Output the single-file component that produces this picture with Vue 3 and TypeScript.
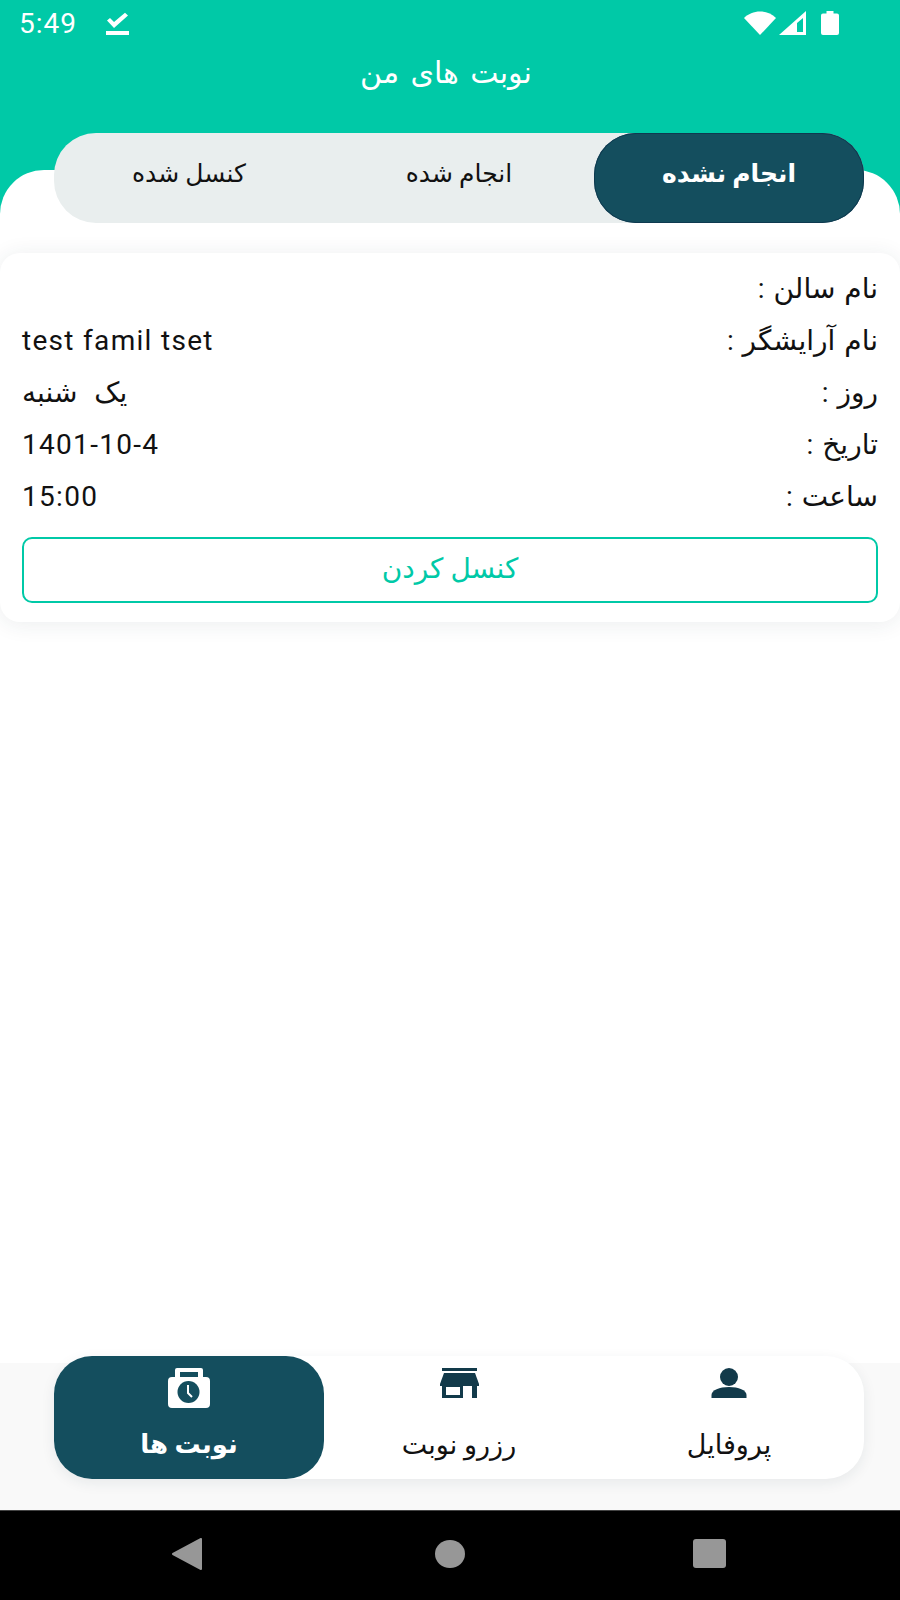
<template>
  <div class="screen">
    <header class="top">
      <div class="status">
        <span class="time">5:49</span>
        <svg class="check" width="24" height="24" viewBox="0 0 24 24">
          <path d="M2 8.500l3-2.600 4 4L20 .8l3 2.600L9 16z" fill="#fff" />
          <rect x="1" y="19" width="23" height="4" fill="#fff" />
        </svg>
        <div class="status-right">
          <svg width="34" height="24" viewBox="0 0 34 24">
            <path d="M1 7C5 3 11 .5 17 .5S29 3 33 7L17 24z" fill="#fff" />
          </svg>
          <svg width="27" height="24" viewBox="0 0 27 24">
            <path d="M0 24L27 0v24zM18 21h6V7l-6 5z" fill="#fff" fill-rule="evenodd" />
          </svg>
          <svg class="battery" width="18" height="24" viewBox="0 0 18 24">
            <path d="M5.500 0h7v2.500H16a2 2 0 0 1 2 2V22a2 2 0 0 1-2 2H2a2 2 0 0 1-2-2V4.500a2 2 0 0 1 2-2h3.500z" fill="#fff" />
          </svg>
        </div>
      </div>
      <h1 class="title">نوبت های من</h1>
    </header>

    <main class="sheet">
      <div class="tabs">
        <button v-for="t in tabs" :key="t" class="tab" :class="{ active: t === activeTab }">{{ t }}</button>
      </div>

      <section class="card">
        <div v-for="row in rows" :key="row.label" class="row">
          <span class="label">{{ row.label }} :</span>
          <span class="value" :class="{ latin: row.latin }">{{ row.value }}</span>
        </div>
        <button class="cancel">کنسل کردن</button>
      </section>
    </main>

    <footer class="bottom">
      <nav class="bar">
        <div class="nav-item active">
          <svg width="42" height="40" viewBox="0 0 42 40">
            <path fill-rule="evenodd" fill="#fff" d="M7 9V2a2 2 0 0 1 2-2h24a2 2 0 0 1 2 2v7h3a4 4 0 0 1 4 4v23a4 4 0 0 1-4 4H4a4 4 0 0 1-4-4V13a4 4 0 0 1 4-4zM12 4v5h18V4z" />
            <circle cx="20.500" cy="24" r="11" fill="#144e5e" />
            <path d="M20 17v8l4 4" stroke="#fff" stroke-width="2" fill="none" />
          </svg>
          <span>نوبت ها</span>
        </div>
        <div class="nav-item">
          <svg width="42" height="40" viewBox="0 0 42 40">
            <rect x="4" y="0" width="35" height="3" fill="#123a4a" />
            <path d="M6 5h31l4 11v2H2v-2z" fill="#123a4a" />
            <path d="M4 18h35v12h-5V18h-9v12H4z" fill="#123a4a" />
            <rect x="8" y="19" width="14" height="8" fill="#fff" />
          </svg>
          <span>رزرو نوبت</span>
        </div>
        <div class="nav-item">
          <svg width="42" height="40" viewBox="0 0 42 40">
            <circle cx="21" cy="9" r="9" fill="#123a4a" />
            <path d="M3.500 30v-3c0-5 8-8 17.500-8s17.500 3 17.500 8v3z" fill="#123a4a" />
          </svg>
          <span>پروفایل</span>
        </div>
      </nav>
    </footer>

    <div class="android-nav">
      <svg class="back" width="32" height="32" viewBox="0 0 32 32">
        <path d="M30 1v30L2 16z" fill="#979797" stroke="#979797" stroke-width="2" stroke-linejoin="round" />
      </svg>
      <span class="home"></span>
      <span class="recent"></span>
    </div>
  </div>
</template>

<script setup lang="ts">
const tabs = ['کنسل شده', 'انجام شده', 'انجام نشده']
const activeTab = 'انجام نشده'

const rows = [
  { label: 'نام سالن', value: '', latin: false },
  { label: 'نام آرایشگر', value: 'test famil tset', latin: true },
  { label: 'روز', value: 'یک شنبه', latin: false },
  { label: 'تاریخ', value: '1401-10-4', latin: true },
  { label: 'ساعت', value: '15:00', latin: true }
]
</script>

<style>
body {
  background: #fff;
}
</style>

<style scoped>
.screen {
  width: 900px;
  height: 1600px;
  display: flex;
  flex-direction: column;
  overflow: hidden;
  background: #fff;
  font-family: Roboto, "DejaVu Sans", "Noto Sans", sans-serif;
  color: #111;
}

.top {
  flex: none;
  height: 215px;
  background: #00c9a7;
  color: #fff;
}

.status {
  display: flex;
  align-items: center;
  height: 46px;
  padding: 0 61px 0 19px;
}

.time {
  font-size: 28px;
  letter-spacing: 1px;
  margin-right: 28px;
}

.check {
  margin-top: 1px;
}

.status-right {
  margin-left: auto;
  display: flex;
  align-items: center;
  gap: 2px;
}

.battery {
  margin-left: 13px;
}

.title {
  margin: 9px 0 0 -8px;
  text-align: center;
  font-size: 30px;
  font-weight: 400;
  word-spacing: 4px;
  direction: rtl;
}

.sheet {
  flex: 1;
  margin-top: -45px;
  background: #fff;
  border-radius: 44px 44px 0 0;
}

.tabs {
  display: flex;
  height: 90px;
  margin: -37px 36px 0 54px;
  border-radius: 42px;
  background: #e9eeee;
}

.tab {
  flex: 1;
  border: 0;
  padding: 0 0 9px;
  border-radius: 42px;
  background: none;
  font: inherit;
  font-size: 25px;
  color: #111;
  direction: rtl;
}

.tab.active {
  background: #144e5e;
  color: #fff;
  font-weight: 700;
  box-shadow: 0 0 0 1px #0f3a50 inset;
}

.card {
  margin-top: 30px;
  padding: 10px 22px 19px;
  background: #fff;
  border-radius: 20px;
  box-shadow: 0 2px 22px rgba(30, 50, 70, 0.09);
}

.row {
  display: flex;
  flex-direction: row-reverse;
  justify-content: space-between;
  align-items: center;
  box-sizing: border-box;
  height: 52px;
  padding-bottom: 2px;
  font-size: 28px;
}

.label {
  direction: rtl;
  word-spacing: 2px;
}

.value {
  direction: rtl;
  word-spacing: 10px;
}

.value.latin {
  direction: ltr;
  letter-spacing: 1.3px;
  word-spacing: 0;
}

.cancel {
  display: block;
  width: 100%;
  height: 66px;
  margin-top: 14px;
  padding: 0 0 4px;
  border: 2px solid #00c9a7;
  border-radius: 10px;
  background: #fff;
  color: #00c9a7;
  font: inherit;
  font-size: 28px;
  direction: rtl;
}

.bottom {
  flex: none;
  height: 147px;
  background: #f9f9f9;
}

.bar {
  display: flex;
  height: 123px;
  margin: -7px 36px 0 54px;
  border-radius: 38px;
  background: #fff;
  box-shadow: 0 4px 14px rgba(30, 50, 70, 0.08);
}

.nav-item {
  flex: 1;
  display: flex;
  flex-direction: column;
  align-items: center;
  padding-top: 12px;
  border-radius: 38px;
  font-size: 27px;
  color: #111;
  direction: rtl;
}

.nav-item span {
  margin-top: 21px;
}

.nav-item.active {
  background: #144e5e;
  color: #fff;
  font-weight: 700;
  font-size: 26px;
}

.android-nav {
  flex: none;
  height: 90px;
  box-sizing: border-box;
  display: flex;
  align-items: center;
  justify-content: center;
  gap: 228px;
  padding: 0 4px 4px 0;
  background: #000;
  border-top: 1px solid #444;
}

.back {
  margin-right: 4px;
}

.home {
  width: 30px;
  height: 28px;
  border-radius: 50%;
  background: #979797;
}

.recent {
  width: 33px;
  height: 29px;
  border-radius: 3px;
  background: #979797;
}
</style>
